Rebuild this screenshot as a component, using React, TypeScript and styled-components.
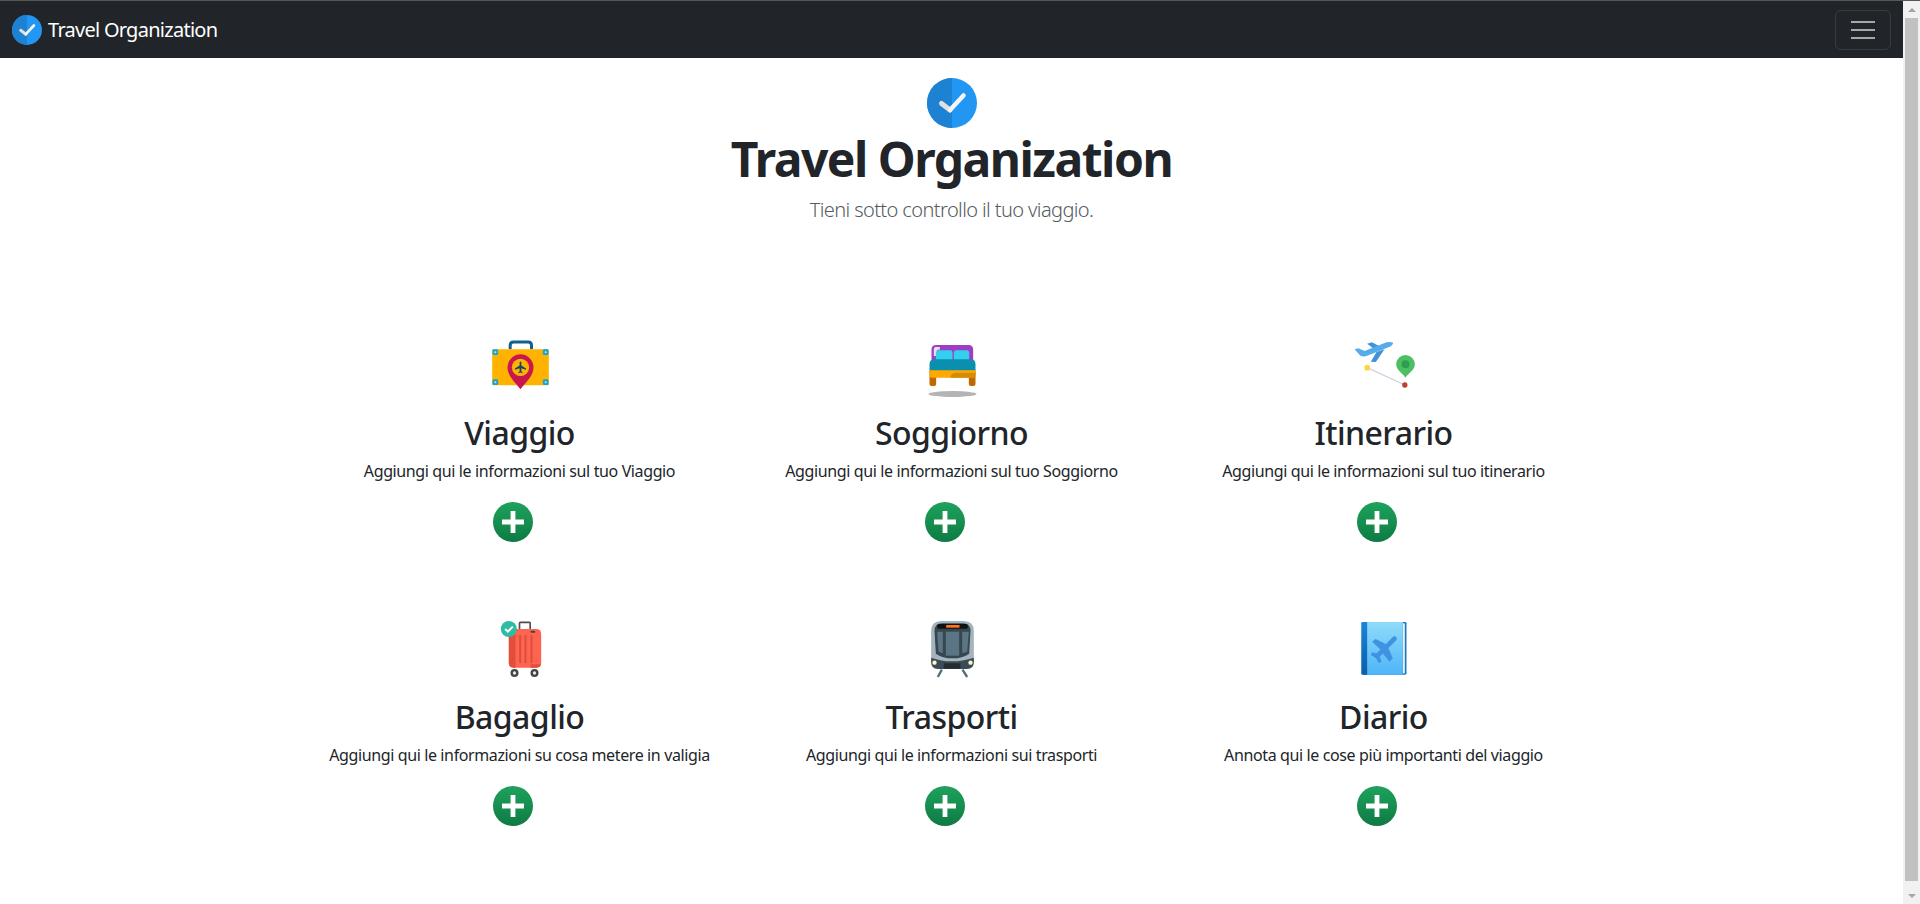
import React from 'react';
import styled, { createGlobalStyle } from 'styled-components';

const GlobalStyle = createGlobalStyle`
  html, body {
    margin: 0;
    height: 100%;
    overflow: hidden;
    background: #fff;
  }
  body {
    font-family: "Noto Sans", "Open Sans", "Liberation Sans", sans-serif;
    color: #212529;
  }
`;

const Frame = styled.div`
  height: 100vh;
  display: flex;
  border-top: 1px solid #565656;
  box-sizing: border-box;
`;

const Page = styled.main`
  flex: 1;
  min-width: 0;
`;

// headless browser hides the native bar, so it is drawn as a plain column
const ScrollTrack = styled.aside`
  width: 17px;
  flex: none;
  background: #f1f1f1;
  display: flex;
  flex-direction: column;
  align-items: center;
`;

const ScrollArrow = styled.div<{ $down?: boolean }>`
  height: 17px;
  flex: none;
  display: flex;
  align-items: center;
  justify-content: center;

  &::before {
    content: '';
    border-left: 4px solid transparent;
    border-right: 4px solid transparent;
    ${(p) => (p.$down ? 'border-top: 4px solid #a3a3a3;' : 'border-bottom: 4px solid #a3a3a3;')}
  }
`;

const ScrollThumb = styled.div`
  width: 13px;
  flex: 1;
  background: #c1c1c1;
  margin-bottom: 6px;
`;

const Navbar = styled.nav`
  height: 57px;
  box-sizing: border-box;
  padding: 0 12px;
  background: #212529;
  display: flex;
  align-items: center;
  justify-content: space-between;
`;

const Brand = styled.a`
  display: flex;
  align-items: center;
  gap: 6px;
  color: #fff;
  font-size: 20px;
  letter-spacing: -0.73px;
  line-height: 30px;
`;

const Toggler = styled.button`
  width: 56px;
  height: 40px;
  padding: 0;
  background: transparent;
  border: 1px solid rgba(255, 255, 255, 0.1);
  border-radius: 6px;
  display: flex;
  flex-direction: column;
  align-items: center;
  justify-content: center;
  gap: 6px;
`;

const TogglerBar = styled.span`
  width: 24px;
  height: 2px;
  background: #a6a8a9;
`;

const Hero = styled.header`
  padding-top: 20px;
  text-align: center;
`;

const HeroTitle = styled.h1`
  margin: 2px 0 0;
  font-size: 48px;
  line-height: 58px;
  font-weight: 700;
  letter-spacing: -1.5px;
`;

const HeroLead = styled.p`
  margin: 7px 0 0;
  font-size: 20px;
  line-height: 30px;
  font-weight: 300;
  letter-spacing: -0.6px;
  color: #555b62;
`;

const FeatureGrid = styled.section`
  width: 1296px;
  margin: 0 auto;
  padding: 108px 0 0;
  display: grid;
  grid-template-columns: repeat(3, 432px);
  grid-auto-rows: 284px;
`;

const Feature = styled.article`
  display: flex;
  flex-direction: column;
  align-items: center;
  text-align: center;
`;

const FeatureTitle = styled.h2`
  margin: 17px 0 0;
  font-size: 32px;
  line-height: 38px;
  font-weight: 500;
  letter-spacing: -0.55px;
`;

const FeatureText = styled.p`
  margin: 7px 0 0;
  font-size: 16px;
  line-height: 24px;
  letter-spacing: -0.38px;
`;

const AddButton = styled.button`
  margin: 19px 14px 0 0;
  width: 40px;
  height: 40px;
  padding: 0;
  border: 0;
  border-radius: 50%;
  background: linear-gradient(#1ea25c, #0e7b43);
  display: flex;
  align-items: center;
  justify-content: center;
`;

const LogoSvg = styled.svg`
  display: inline-block;
  vertical-align: top;
`;

const Logo = ({ size }: { size: number }) => (
  <LogoSvg width={size} height={size} viewBox="0 0 100 100">
    <circle cx="50" cy="50" r="50" fill="#2196f3" />
    <path d="M50 0a50 50 0 0 0 0 100z" fill="#1e82d2" />
    <path d="M29 51l17 13" stroke="#e0e0e0" strokeWidth="10" fill="none" strokeLinecap="round" />
    <path d="M46 64l27-29" stroke="#f5f5f5" strokeWidth="9" fill="none" strokeLinecap="round" />
  </LogoSvg>
);

const PLANE = 'M21 16v-2l-8-5V3.5c0-.83-.67-1.5-1.5-1.5S10 2.67 10 3.5V9l-8 5v2l8-2.5V19l-2 1.5V22l3.5-1 3.5 1v-1.5L13 19v-5.5l8 2.5z';

const SuitcaseIcon = () => (
  <svg width="64" height="64" viewBox="52.5 21 192 192">
    <path d="M119 70V58q0-10 10-10h44q10 0 10 10v12" fill="none" stroke="#12608c" strokeWidth="9" />
    <rect x="65" y="70" width="170" height="108" rx="3" fill="#ffb300" />
    {[[66, 70], [217, 70], [66, 160], [217, 160]].map(([x, y]) => (
      <g key={`${x}-${y}`}>
        <rect x={x} y={y} width="17" height="17" rx="4" fill="#17a5cf" />
        <circle cx={x + 8.5} cy={y + 8.5} r="3" fill="#b9e6f3" />
      </g>
    ))}
    <path d="M150 190C132 166 111 150 111 124a39 39 0 0 1 78 0C189 150 168 166 150 190z" fill="#c8164f" />
    <circle cx="150" cy="124" r="26" fill="#ffb300" />
    <path d={PLANE} transform="translate(150 124) scale(1.75) translate(-11.5 -12)" fill="#12446c" />
  </svg>
);

const BedIcon = () => (
  <svg width="64" height="64" viewBox="58.5 6 192 192">
    <path d="M93 92V56q0-14 14-14h97q14 0 14 14v36z" fill="#9c3fc4" />
    <path d="M100 75V54q0-6 6-6h12v8h-8v19z" fill="#ece0f4" />
    <rect x="106" y="58" width="50" height="34" rx="7" fill="#32d0ee" />
    <rect x="160" y="58" width="46" height="34" rx="7" fill="#32d0ee" />
    <path d="M87 122V100q0-15 15-15h108q15 0 15 15v22z" fill="#0a8fae" />
    <rect x="87" y="118" width="20" height="47" rx="6" fill="#bf6a00" />
    <rect x="205" y="118" width="20" height="47" rx="6" fill="#bf6a00" />
    <path d="M87 118H225V132q0 8-8 8H95q-8 0-8-8z" fill="#ffa800" />
    <path d="M150 140q0-14 16-15h59v7q0 8-8 8z" fill="#d68a05" />
    <ellipse cx="156" cy="189" rx="72" ry="9" fill="#b4b4b4" />
  </svg>
);

const RouteIcon = () => (
  <svg width="64" height="64" viewBox="34.5 21 192 192">
    <path d="M80 125L193 177" stroke="#cdd3e2" strokeWidth="4" />
    <circle cx="80" cy="125" r="8.5" fill="#fbd83e" />
    <circle cx="193" cy="177" r="8" fill="#c43c2c" />
    <path d="M80 53l14-4 28 14-18 8z" fill="#3f93d6" />
    <path d="M108 78l24-8-26 38-15-1z" fill="#3f93d6" />
    <path d="M42 70l12-3 18 8 66-26q12-3 20 1-1 8-14 14L78 90q-10 3-18-1z" fill="#55aceb" />
    <path d="M195 155C185 140 167 132 167 115a28 28 0 0 1 56 0C223 132 205 140 195 155z" fill="#4cc063" />
    <circle cx="195" cy="115" r="12" fill="#2f9e52" />
  </svg>
);

const BagIcon = () => (
  <svg width="64" height="64" viewBox="22.5 18 192 192">
    <path d="M117 56V36q0-2 2-2h28q2 0 2 2v20" fill="none" stroke="#4e4e4e" strokeWidth="5" />
    <rect x="85" y="54" width="97" height="116" rx="14" fill="#ff6450" />
    <path d="M99 54q-14 0-14 14v88q0 14 14 14h6V54z" fill="#e04f3a" />
    <path d="M150 170V160h32v-4q0 14-14 14z" fill="#e04f3a" />
    {[116, 132, 150].map((x) => (
      <rect key={x} x={x} y="72" width="6" height="84" fill="#d94f3a" />
    ))}
    <rect x="150" y="59" width="14" height="6" rx="2" fill="#444" />
    {[102, 162].map((x) => (
      <g key={x}>
        <circle cx={x} cy="186" r="12" fill="#444" />
        <circle cx={x} cy="186" r="5" fill="#e8e8e8" />
      </g>
    ))}
    <circle cx="85" cy="54" r="24" fill="#2dbda4" />
    <path d="M74 54l8 8 15-15" fill="none" stroke="#fff" strokeWidth="6" />
  </svg>
);

const TrainIcon = () => (
  <svg width="64" height="64" viewBox="28.5 18 192 192">
    <path d="M94 176L82 198M156 176L170 198" stroke="#546e7a" strokeWidth="7" />
    <path d="M62 60q0-30 30-30h68q30 0 30 30v90q0 20-20 20H82q-20 0-20-20z" fill="#a4b4be" />
    <path d="M72 60q0-23 23-23h62q23 0 23 23l-4 68q-20 14-50 14t-50-14z" fill="#37474f" />
    <rect x="80" y="39" width="92" height="14" rx="5" fill="#111" />
    <rect x="107" y="42" width="40" height="8" fill="#ff7518" />
    <path d="M80 62H97V127L84 122z" fill="#5a7684" />
    <rect x="106" y="62" width="40" height="72" fill="#5a7684" />
    <path d="M155 62H175L170 122L155 127z" fill="#5a7684" />
    <path d="M62 140q60 22 128 0v14q0 20-20 20H82q-20 0-20-20z" fill="#3b4c56" />
    <rect x="100" y="157" width="50" height="16" fill="#232c31" />
    <circle cx="72" cy="155" r="6.5" fill="#fff6c8" />
    <circle cx="180" cy="155" r="6.5" fill="#fff6c8" />
  </svg>
);

const DiaryIcon = () => (
  <svg width="64" height="64" viewBox="19.5 18 192 192">
    <defs>
      <linearGradient id="diaryCover" x1="0" y1="0" x2="0" y2="1">
        <stop offset="0" stopColor="#90dbfb" />
        <stop offset="1" stopColor="#4db5f7" />
      </linearGradient>
      <linearGradient id="diarySpine" x1="0" y1="0" x2="0" y2="1">
        <stop offset="0" stopColor="#1a85d8" />
        <stop offset="1" stopColor="#0d5ea8" />
      </linearGradient>
    </defs>
    <rect x="48" y="33" width="135" height="158" rx="4" fill="#1a78c8" />
    <rect x="172" y="37" width="6" height="150" fill="#eceff1" />
    <path d="M52 33H172V191H52q-4 0-4-4V37q0-4 4-4z" fill="url(#diaryCover)" />
    <path d="M52 33H65V191H52q-4 0-4-4V37q0-4 4-4z" fill="url(#diarySpine)" />
    <path d="M147 83L96 134" stroke="#3f92e2" strokeWidth="14" strokeLinecap="round" />
    <path d="M122 100L90 84L80 92L106 116z" fill="#3f92e2" />
    <path d="M126 106L142 142L132 152L108 122z" fill="#3f92e2" />
    <path d="M100 130L80 124L76 132L92 142L100 156L108 152z" fill="#3f92e2" />
  </svg>
);

const PlusIcon = () => (
  <svg width="24" height="24" viewBox="0 0 24 24">
    <path d="M9.6 1h4.8v8.6H23v4.8h-8.6V23H9.6v-8.6H1V9.6h8.6z" fill="#fff" />
  </svg>
);

const features = [
  { title: 'Viaggio', text: 'Aggiungi qui le informazioni sul tuo Viaggio', icon: <SuitcaseIcon /> },
  { title: 'Soggiorno', text: 'Aggiungi qui le informazioni sul tuo Soggiorno', icon: <BedIcon /> },
  { title: 'Itinerario', text: 'Aggiungi qui le informazioni sul tuo itinerario', icon: <RouteIcon /> },
  { title: 'Bagaglio', text: 'Aggiungi qui le informazioni su cosa metere in valigia', icon: <BagIcon /> },
  { title: 'Trasporti', text: 'Aggiungi qui le informazioni sui trasporti', icon: <TrainIcon /> },
  { title: 'Diario', text: 'Annota qui le cose più importanti del viaggio', icon: <DiaryIcon /> },
];

export default function App() {
  return (
    <Frame>
      <GlobalStyle />
      <Page>
        <Navbar>
          <Brand>
            <Logo size={30} />
            Travel Organization
          </Brand>
          <Toggler aria-label="Toggle navigation">
            <TogglerBar />
            <TogglerBar />
            <TogglerBar />
          </Toggler>
        </Navbar>

        <Hero>
          <Logo size={50} />
          <HeroTitle>Travel Organization</HeroTitle>
          <HeroLead>Tieni sotto controllo il tuo viaggio.</HeroLead>
        </Hero>

        <FeatureGrid>
          {features.map((feature) => (
            <Feature key={feature.title}>
              {feature.icon}
              <FeatureTitle>{feature.title}</FeatureTitle>
              <FeatureText>{feature.text}</FeatureText>
              <AddButton aria-label={`Aggiungi ${feature.title}`}>
                <PlusIcon />
              </AddButton>
            </Feature>
          ))}
        </FeatureGrid>
      </Page>
      <ScrollTrack>
        <ScrollArrow />
        <ScrollThumb />
        <ScrollArrow $down />
      </ScrollTrack>
    </Frame>
  );
}
